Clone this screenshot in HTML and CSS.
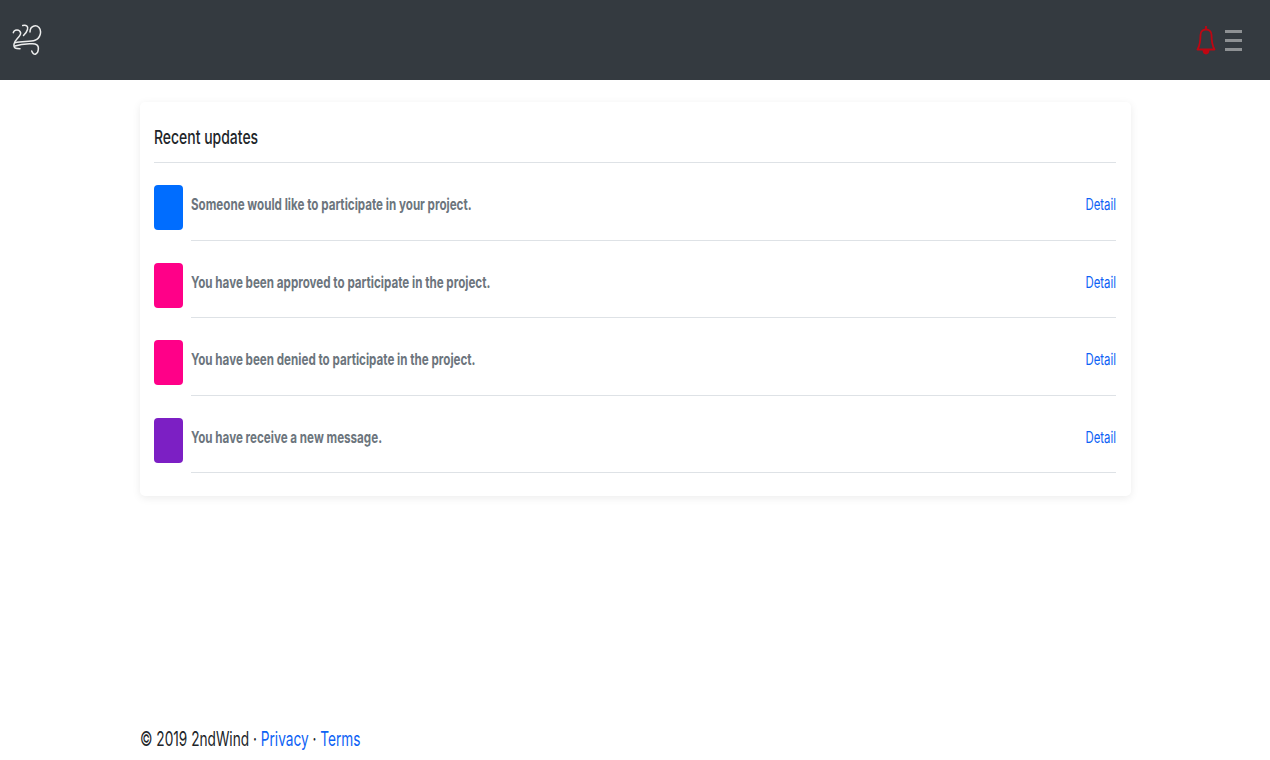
FILE: index.html
```html
<!DOCTYPE html>
<html lang="en">
<head>
  <meta charset="UTF-8" />
  <title>2ndWind</title>
  <link rel="stylesheet" href="styles.css">
</head>
<body>
  <nav class="navbar">
    <a class="brand" href="#">
      <svg class="logo" viewBox="0 0 30 34" width="30" height="34" fill="none" stroke="#eceded" stroke-width="1.500" stroke-linecap="round">
        <path d="M1.300 9.700C2 6.500 7.500 5.500 8.700 10C8.500 14 2.500 17 2 21C1.500 25.700 4 25.700 8 25.700"/>
        <path d="M10.700 2.500C14 1.500 16.500 3 15.500 6.500C15 8.500 13 11 11.500 12.500"/>
        <path d="M3 19.700C10 18 18 19 23 17.300C28.500 15.500 30 8 27 4.500C24 1.500 18 2.500 18 9"/>
        <path d="M3 23C10 21 16 21 19.700 20.700C24 20.500 27 22 26.300 26.500C26 30.500 22 34 19.700 28"/>
      </svg>
    </a>
    <div class="nav-icons">
      <svg class="bell" viewBox="0 0 20 30" width="20" height="30" fill="none" stroke="#c00612" stroke-width="1.800" stroke-linejoin="round">
        <path d="M10 1V4.500"/>
        <path d="M4.500 10C4.500 6.500 7 4.500 10 4.500S15.500 6.500 15.500 10C15.500 16 16.500 21 18.500 24.500H1.500C3.500 21 4.500 16 4.500 10Z"/>
        <path d="M7.500 25H12.500C12.500 27 11.500 28.500 10 28.500S7.500 27 7.500 25Z" fill="#c00612"/>
      </svg>
      <div class="burger"><span></span><span></span><span></span></div>
    </div>
  </nav>

  <main class="container">
    <div class="card">
      <h6 class="card-title"><span>Recent updates</span></h6>
      <div class="update">
        <div class="swatch blue"></div>
        <div class="update-body">
          <strong><span>Someone would like to participate in your project.</span></strong>
          <a href="#"><span>Detail</span></a>
        </div>
      </div>
      <div class="update">
        <div class="swatch pink"></div>
        <div class="update-body">
          <strong><span>You have been approved to participate in the project.</span></strong>
          <a href="#"><span>Detail</span></a>
        </div>
      </div>
      <div class="update">
        <div class="swatch pink"></div>
        <div class="update-body">
          <strong><span>You have been denied to participate in the project.</span></strong>
          <a href="#"><span>Detail</span></a>
        </div>
      </div>
      <div class="update">
        <div class="swatch purple"></div>
        <div class="update-body">
          <strong><span>You have receive a new message.</span></strong>
          <a href="#"><span>Detail</span></a>
        </div>
      </div>
    </div>
  </main>

  <footer class="footer">
    <p>© 2019 2ndWind · <a href="#">Privacy</a> · <a href="#">Terms</a></p>
  </footer>
</body>
</html>
```

FILE: styles.css
```css
body {
  font-family: "Inter", "Liberation Sans", sans-serif;
  margin: 0;
  min-height: 760px;
  display: flex;
  flex-direction: column;
  background: #fff;
  color: #212529;
}
a {
  color: #0d62f5;
  text-decoration: none;
}
.navbar {
  height: 80px;
  background: #343a40;
  display: flex;
  align-items: center;
  justify-content: space-between;
  padding: 0 28px 0 12px;
  flex-shrink: 0;
}
.brand {
  display: flex;
}
.logo {
  margin-top: -1px;
}
.nav-icons {
  display: flex;
  align-items: center;
  gap: 9px;
}
.burger {
  width: 17px;
  display: flex;
  flex-direction: column;
  gap: 6px;
}
.burger span {
  height: 3px;
  background: #8e9194;
}
.container {
  flex: 1;
  width: 991px;
  margin-left: 140px;
  padding-top: 22px;
  box-sizing: border-box;
}
.card {
  background: #fff;
  border-radius: 5px;
  box-shadow: 0 2px 8px rgba(0, 0, 0, 0.08);
  padding: 14px 15px 23px 14px;
}
.card-title {
  margin: 0;
  height: 47px;
  padding-bottom: 4px;
  box-sizing: border-box;
  display: flex;
  align-items: center;
  font-size: 19px;
  font-weight: 500;
  line-height: 1;
  border-bottom: 1px solid #dee2e6;
}
.card-title span {
  display: inline-block;
  transform: scaleX(0.735);
  transform-origin: left center;
  white-space: nowrap;
}
.update-body span {
  display: inline-block;
  transform: scaleX(0.727);
  transform-origin: left center;
  white-space: nowrap;
}
.update {
  display: flex;
  align-items: flex-start;
  gap: 7.500px;
  padding-top: 22px;
}
.swatch {
  width: 29px;
  height: 45px;
  border-radius: 4px;
  flex-shrink: 0;
}
.blue { background: #006dff; }
.pink { background: #ff0088; }
.purple { background: #7c1fc4; }
.update-body {
  flex: 1;
  height: 55.500px;
  box-sizing: border-box;
  display: flex;
  justify-content: space-between;
  align-items: flex-start;
  padding-top: 10px;
  border-bottom: 1px solid #dee2e6;
  font-size: 16px;
  line-height: 19px;
}
.update-body strong {
  color: #6c757d;
  font-weight: 700;
}
.update-body a span {
  transform: scaleX(0.71);
  transform-origin: right center;
}
.footer {
  width: 991px;
  margin-left: 140px;
  height: 34px;
  flex-shrink: 0;
}
.footer p {
  margin: 0;
  font-size: 20px;
  line-height: 26px;
  transform: scaleX(0.683);
  transform-origin: left center;
  white-space: nowrap;
}
```
